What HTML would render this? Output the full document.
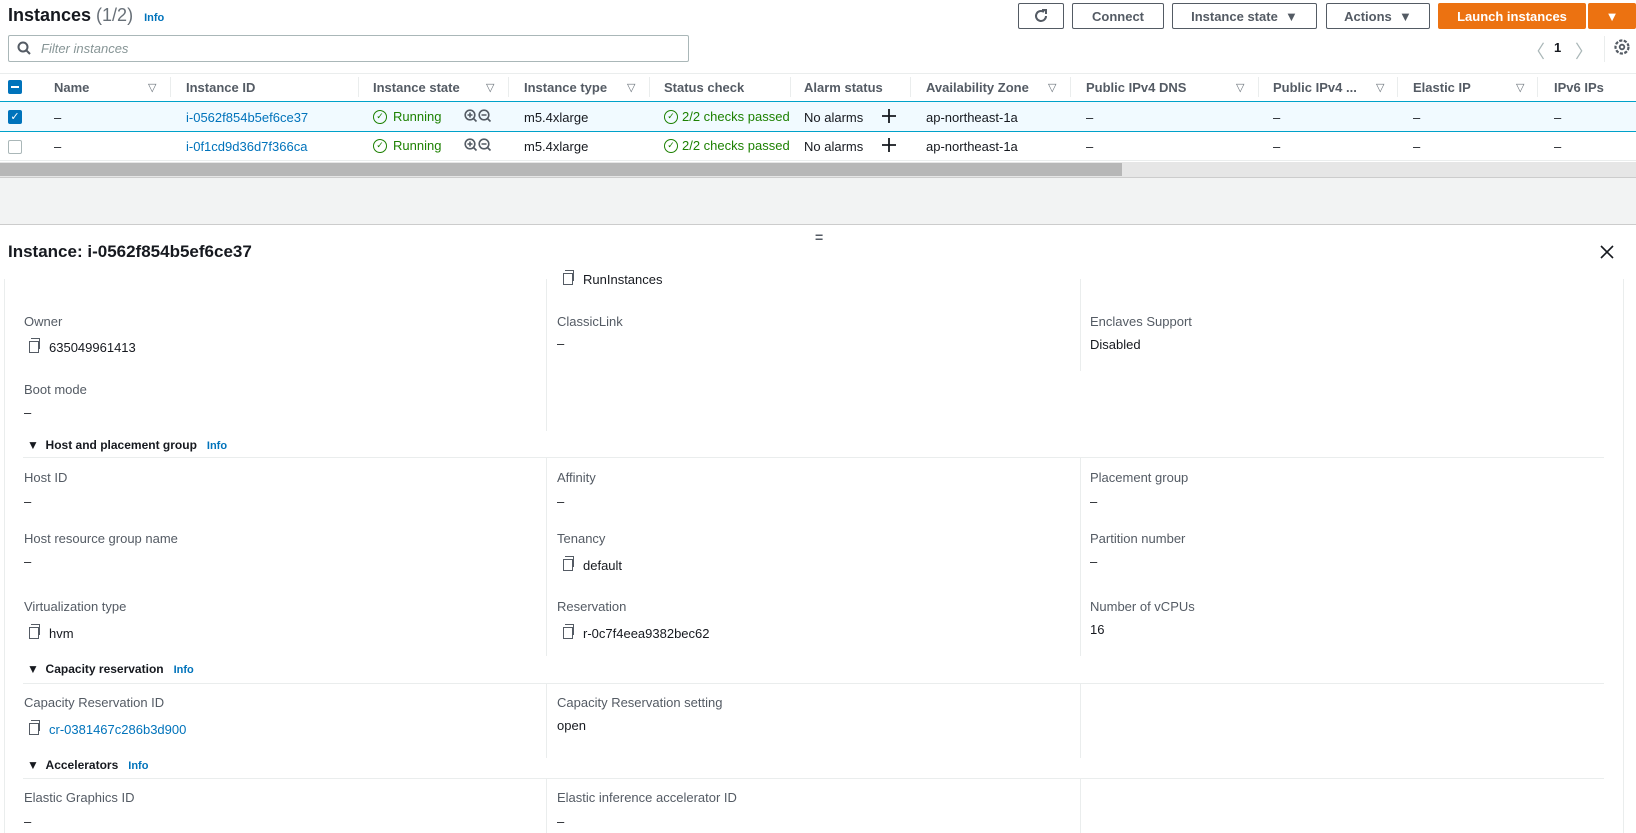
<!DOCTYPE html>
<html><head><meta charset="utf-8">
<style>
*{box-sizing:border-box;margin:0;padding:0}
body{width:1636px;height:833px;overflow:hidden;background:#fff;font-family:"Liberation Sans",sans-serif;font-size:13px;color:#16191f;position:relative}
.a{position:absolute;white-space:nowrap}
.btn{position:absolute;top:3px;height:26px;border:1px solid #545b64;border-radius:2px;background:#fff;font-weight:bold;font-size:13px;color:#545b64;display:flex;align-items:center;justify-content:center}
.hd{position:absolute;top:80px;font-weight:bold;color:#545b64;font-size:13px}
.sep{position:absolute;top:77px;width:1px;height:20px;background:#eaeded}
.fi{position:absolute;top:81px;color:#687078;font-size:11px}
.link{color:#0073bb}
.lbl{position:absolute;color:#545b64;font-size:13px}
.val{position:absolute;font-size:13px;color:#16191f}
.cp{display:inline-block;width:10px;height:12px;border:1.5px solid #545b64;position:relative;margin-right:10px;vertical-align:-1px}
.cp:before{content:"";position:absolute;left:1px;top:-4px;width:8px;height:10px;border-top:1.5px solid #545b64;border-right:1.5px solid #545b64}
.vd{position:absolute;width:1px;background:#eaeded}
.hl{position:absolute;height:1px;background:#eaeded;left:23px;width:1581px}
.sec{position:absolute;font-weight:bold;font-size:12px;color:#16191f}
.info{color:#0073bb;font-size:11px;font-weight:bold;margin-left:10px}
.green{color:#1d8102;display:flex;align-items:center}
.ck{display:inline-block;width:14px;height:14px;border:1.5px solid #1d8102;border-radius:50%;font-size:9px;line-height:11px;text-align:center;margin-right:6px}
.zm{position:absolute;display:flex;gap:1px}
</style></head><body>
<div class="a" style="left:8px;top:5px;font-size:18px;font-weight:bold">Instances <span style="font-weight:normal;color:#687078">(1/2)</span> <span style="font-size:11px;color:#0073bb;margin-left:6px">Info</span></div>
<div class="btn" style="left:1018px;width:46px"><svg width="16" height="16" viewBox="0 0 16 16"><path d="M13 8a5 5 0 1 1-2-4" fill="none" stroke="#545b64" stroke-width="2"/><path d="M9 2h4v4" fill="none" stroke="#545b64" stroke-width="2"/></svg></div>
<div class="btn" style="left:1072px;width:92px">Connect</div>
<div class="btn" style="left:1172px;width:145px">Instance state &nbsp;▼</div>
<div class="btn" style="left:1326px;width:104px">Actions &nbsp;▼</div>
<div class="btn" style="left:1438px;width:148px;background:#ec7211;border-color:#ec7211;color:#fff">Launch instances</div>
<div class="btn" style="left:1588px;width:48px;background:#ec7211;border-color:#ec7211;color:#fff">▼</div>
<div class="a" style="left:8px;top:35px;width:681px;height:27px;border:1px solid #aab7b8;border-radius:2px"></div>
<svg class="a" style="left:17px;top:41px" width="14" height="14" viewBox="0 0 14 14"><circle cx="6" cy="6" r="4.5" fill="none" stroke="#545b64" stroke-width="2"/><path d="M9.5 9.5l3.5 3.5" stroke="#545b64" stroke-width="2"/></svg>
<div class="a" style="left:41px;top:41px;color:#879596;font-style:italic">Filter instances</div>
<div class="a" style="left:1527px;top:38px;font-size:18px;color:#aab7b8">〈</div>
<div class="a" style="left:1554px;top:40px;font-weight:bold">1</div>
<div class="a" style="left:1575px;top:38px;font-size:18px;color:#aab7b8">〉</div>
<div class="a" style="left:1604px;top:36px;width:1px;height:26px;background:#eaeded"></div>
<svg class="a" style="left:1613px;top:38px" width="18" height="18" viewBox="0 0 18 18"><circle cx="9" cy="9" r="6.5" fill="none" stroke="#545b64" stroke-width="2.2" stroke-dasharray="3.2 1.4"/><circle cx="9" cy="9" r="2.3" fill="none" stroke="#545b64" stroke-width="1.8"/></svg>

<div class="a" style="left:0;top:73px;width:1636px;height:1px;background:#eaeded"></div>
<div class="a" style="left:8px;top:80px;width:14px;height:14px;background:#0073bb;border-radius:2px"><div style="margin:6px 3px;width:8px;height:2px;background:#fff"></div></div>
<div class="hd" style="left:54px">Name</div><div class="fi" style="left:148px">▽</div><div class="sep" style="left:170px"></div>
<div class="hd" style="left:186px">Instance ID</div><div class="sep" style="left:358px"></div>
<div class="hd" style="left:373px">Instance state</div><div class="fi" style="left:486px">▽</div><div class="sep" style="left:508px"></div>
<div class="hd" style="left:524px">Instance type</div><div class="fi" style="left:627px">▽</div><div class="sep" style="left:649px"></div>
<div class="hd" style="left:664px">Status check</div><div class="sep" style="left:790px"></div>
<div class="hd" style="left:804px">Alarm status</div><div class="sep" style="left:910px"></div>
<div class="hd" style="left:926px">Availability Zone</div><div class="fi" style="left:1048px">▽</div><div class="sep" style="left:1070px"></div>
<div class="hd" style="left:1086px">Public IPv4 DNS</div><div class="fi" style="left:1236px">▽</div><div class="sep" style="left:1258px"></div>
<div class="hd" style="left:1273px">Public IPv4 ...</div><div class="fi" style="left:1376px">▽</div><div class="sep" style="left:1397px"></div>
<div class="hd" style="left:1413px">Elastic IP</div><div class="fi" style="left:1516px">▽</div><div class="sep" style="left:1537px"></div>
<div class="hd" style="left:1554px">IPv6 IPs</div>

<div class="a" style="left:0;top:101px;width:1636px;height:31px;background:#f1faff;border-top:1px solid #00a1c9;border-bottom:1px solid #00a1c9"></div>
<div class="a" style="left:0;top:160px;width:1636px;height:1px;background:#eaeded"></div>
<div class="a" style="left:8px;top:110px;width:14px;height:14px;background:#0073bb;border-radius:2px;color:#fff;font-size:11px;text-align:center;line-height:14px">✓</div>
<div class="a" style="left:8px;top:140px;width:14px;height:14px;border:1px solid #aab7b8;border-radius:2px"></div>
<div class="a" style="left:0;top:162px;width:1636px;height:15px;background:#e6e6e6"></div>
<div class="a" style="left:0;top:163px;width:1122px;height:13px;background:#b7b7b7"></div>
<div class="a" style="left:0;top:177px;width:1636px;height:48px;background:#f2f3f3;border-top:1px solid #ccc;border-bottom:1px solid #ccc"></div>
<div class="a" style="left:815px;top:229px;font-size:14px;color:#545b64;font-weight:bold">=</div>
<div class="a" style="left:8px;top:242px;font-size:17px;font-weight:bold">Instance: i-0562f854b5ef6ce37</div>
<svg class="a" style="left:1600px;top:245px" width="14" height="14" viewBox="0 0 14 14"><path d="M1 1l12 12M13 1L1 13" stroke="#16191f" stroke-width="1.6"/></svg>
<div class="a" style="left:4px;top:279px;width:1px;height:554px;background:#eaeded"></div>
<div class="a" style="left:1623px;top:279px;width:1px;height:554px;background:#eaeded"></div>

<div class="val" style="left:563px;top:272px"><span class="cp"></span>RunInstances</div>
<div class="vd" style="left:546px;top:279px;height:152px"></div>
<div class="vd" style="left:1080px;top:279px;height:92px"></div>
<div class="lbl" style="left:24px;top:314px">Owner</div><div class="val" style="left:29px;top:340px"><span class="cp"></span>635049961413</div>
<div class="lbl" style="left:557px;top:314px">ClassicLink</div><div class="val" style="left:557px;top:336px">–</div>
<div class="lbl" style="left:1090px;top:314px">Enclaves Support</div><div class="val" style="left:1090px;top:337px">Disabled</div>
<div class="lbl" style="left:24px;top:382px">Boot mode</div><div class="val" style="left:24px;top:405px">–</div>

<div class="sec" style="left:27px;top:438px">▼ &nbsp;Host and placement group<span class="info">Info</span></div>
<div class="hl" style="top:457px"></div>
<div class="vd" style="left:546px;top:458px;height:198px"></div><div class="vd" style="left:1080px;top:458px;height:198px"></div>
<div class="lbl" style="left:24px;top:470px">Host ID</div><div class="val" style="left:24px;top:494px">–</div>
<div class="lbl" style="left:557px;top:470px">Affinity</div><div class="val" style="left:557px;top:494px">–</div>
<div class="lbl" style="left:1090px;top:470px">Placement group</div><div class="val" style="left:1090px;top:494px">–</div>
<div class="lbl" style="left:24px;top:531px">Host resource group name</div><div class="val" style="left:24px;top:554px">–</div>
<div class="lbl" style="left:557px;top:531px">Tenancy</div><div class="val" style="left:563px;top:558px"><span class="cp"></span>default</div>
<div class="lbl" style="left:1090px;top:531px">Partition number</div><div class="val" style="left:1090px;top:554px">–</div>
<div class="lbl" style="left:24px;top:599px">Virtualization type</div><div class="val" style="left:29px;top:626px"><span class="cp"></span>hvm</div>
<div class="lbl" style="left:557px;top:599px">Reservation</div><div class="val" style="left:563px;top:626px"><span class="cp"></span>r-0c7f4eea9382bec62</div>
<div class="lbl" style="left:1090px;top:599px">Number of vCPUs</div><div class="val" style="left:1090px;top:622px">16</div>

<div class="sec" style="left:27px;top:662px">▼ &nbsp;Capacity reservation<span class="info">Info</span></div>
<div class="hl" style="top:683px"></div>
<div class="vd" style="left:546px;top:684px;height:74px"></div><div class="vd" style="left:1080px;top:684px;height:74px"></div>
<div class="lbl" style="left:24px;top:695px">Capacity Reservation ID</div><div class="val link" style="left:29px;top:722px;color:#0073bb"><span class="cp"></span>cr-0381467c286b3d900</div>
<div class="lbl" style="left:557px;top:695px">Capacity Reservation setting</div><div class="val" style="left:557px;top:718px">open</div>

<div class="sec" style="left:27px;top:758px">▼ &nbsp;Accelerators<span class="info">Info</span></div>
<div class="hl" style="top:778px"></div>
<div class="vd" style="left:546px;top:779px;height:54px"></div><div class="vd" style="left:1080px;top:779px;height:54px"></div>
<div class="lbl" style="left:24px;top:790px">Elastic Graphics ID</div><div class="val" style="left:24px;top:814px">–</div>
<div class="lbl" style="left:557px;top:790px">Elastic inference accelerator ID</div><div class="val" style="left:557px;top:814px">–</div>

<!-- row 1 -->
<div class="a" style="left:54px;top:110px">–</div>
<div class="a link" style="left:186px;top:110px">i-0562f854b5ef6ce37</div>
<div class="a green" style="left:373px;top:109px"><span class="ck">✓</span> Running</div>
<div class="zm" style="left:464px;top:109px"><svg width="30" height="15" viewBox="0 0 30 15"><circle cx="6" cy="6" r="4.8" fill="none" stroke="#545b64" stroke-width="1.6"/><path d="M3.5 6h5M6 3.5v5M9.5 9.5l3 3" stroke="#545b64" stroke-width="1.6"/><circle cx="20" cy="6" r="4.8" fill="none" stroke="#545b64" stroke-width="1.6"/><path d="M17.5 6h5M23.5 9.5l3 3" stroke="#545b64" stroke-width="1.6"/></svg></div>
<div class="a" style="left:524px;top:110px">m5.4xlarge</div>
<div class="a green" style="left:664px;top:109px"><span class="ck" style="margin-right:4px">✓</span>2/2 checks passed</div>
<div class="a" style="left:804px;top:110px">No alarms</div>
<svg class="a" style="left:882px;top:109px" width="14" height="14" viewBox="0 0 14 14"><path d="M7 0v14M0 7h14" stroke="#16191f" stroke-width="1.8"/></svg>
<div class="a" style="left:926px;top:110px">ap-northeast-1a</div>
<div class="a" style="left:1086px;top:110px">–</div><div class="a" style="left:1273px;top:110px">–</div><div class="a" style="left:1413px;top:110px">–</div><div class="a" style="left:1554px;top:110px">–</div>
<!-- row 2 -->
<div class="a" style="left:54px;top:139px">–</div>
<div class="a link" style="left:186px;top:139px">i-0f1cd9d36d7f366ca</div>
<div class="a green" style="left:373px;top:138px"><span class="ck">✓</span> Running</div>
<div class="zm" style="left:464px;top:138px"><svg width="30" height="15" viewBox="0 0 30 15"><circle cx="6" cy="6" r="4.8" fill="none" stroke="#545b64" stroke-width="1.6"/><path d="M3.5 6h5M6 3.5v5M9.5 9.5l3 3" stroke="#545b64" stroke-width="1.6"/><circle cx="20" cy="6" r="4.8" fill="none" stroke="#545b64" stroke-width="1.6"/><path d="M17.5 6h5M23.5 9.5l3 3" stroke="#545b64" stroke-width="1.6"/></svg></div>
<div class="a" style="left:524px;top:139px">m5.4xlarge</div>
<div class="a green" style="left:664px;top:138px"><span class="ck" style="margin-right:4px">✓</span>2/2 checks passed</div>
<div class="a" style="left:804px;top:139px">No alarms</div>
<svg class="a" style="left:882px;top:138px" width="14" height="14" viewBox="0 0 14 14"><path d="M7 0v14M0 7h14" stroke="#16191f" stroke-width="1.8"/></svg>
<div class="a" style="left:926px;top:139px">ap-northeast-1a</div>
<div class="a" style="left:1086px;top:139px">–</div><div class="a" style="left:1273px;top:139px">–</div><div class="a" style="left:1413px;top:139px">–</div><div class="a" style="left:1554px;top:139px">–</div>
</body></html>
